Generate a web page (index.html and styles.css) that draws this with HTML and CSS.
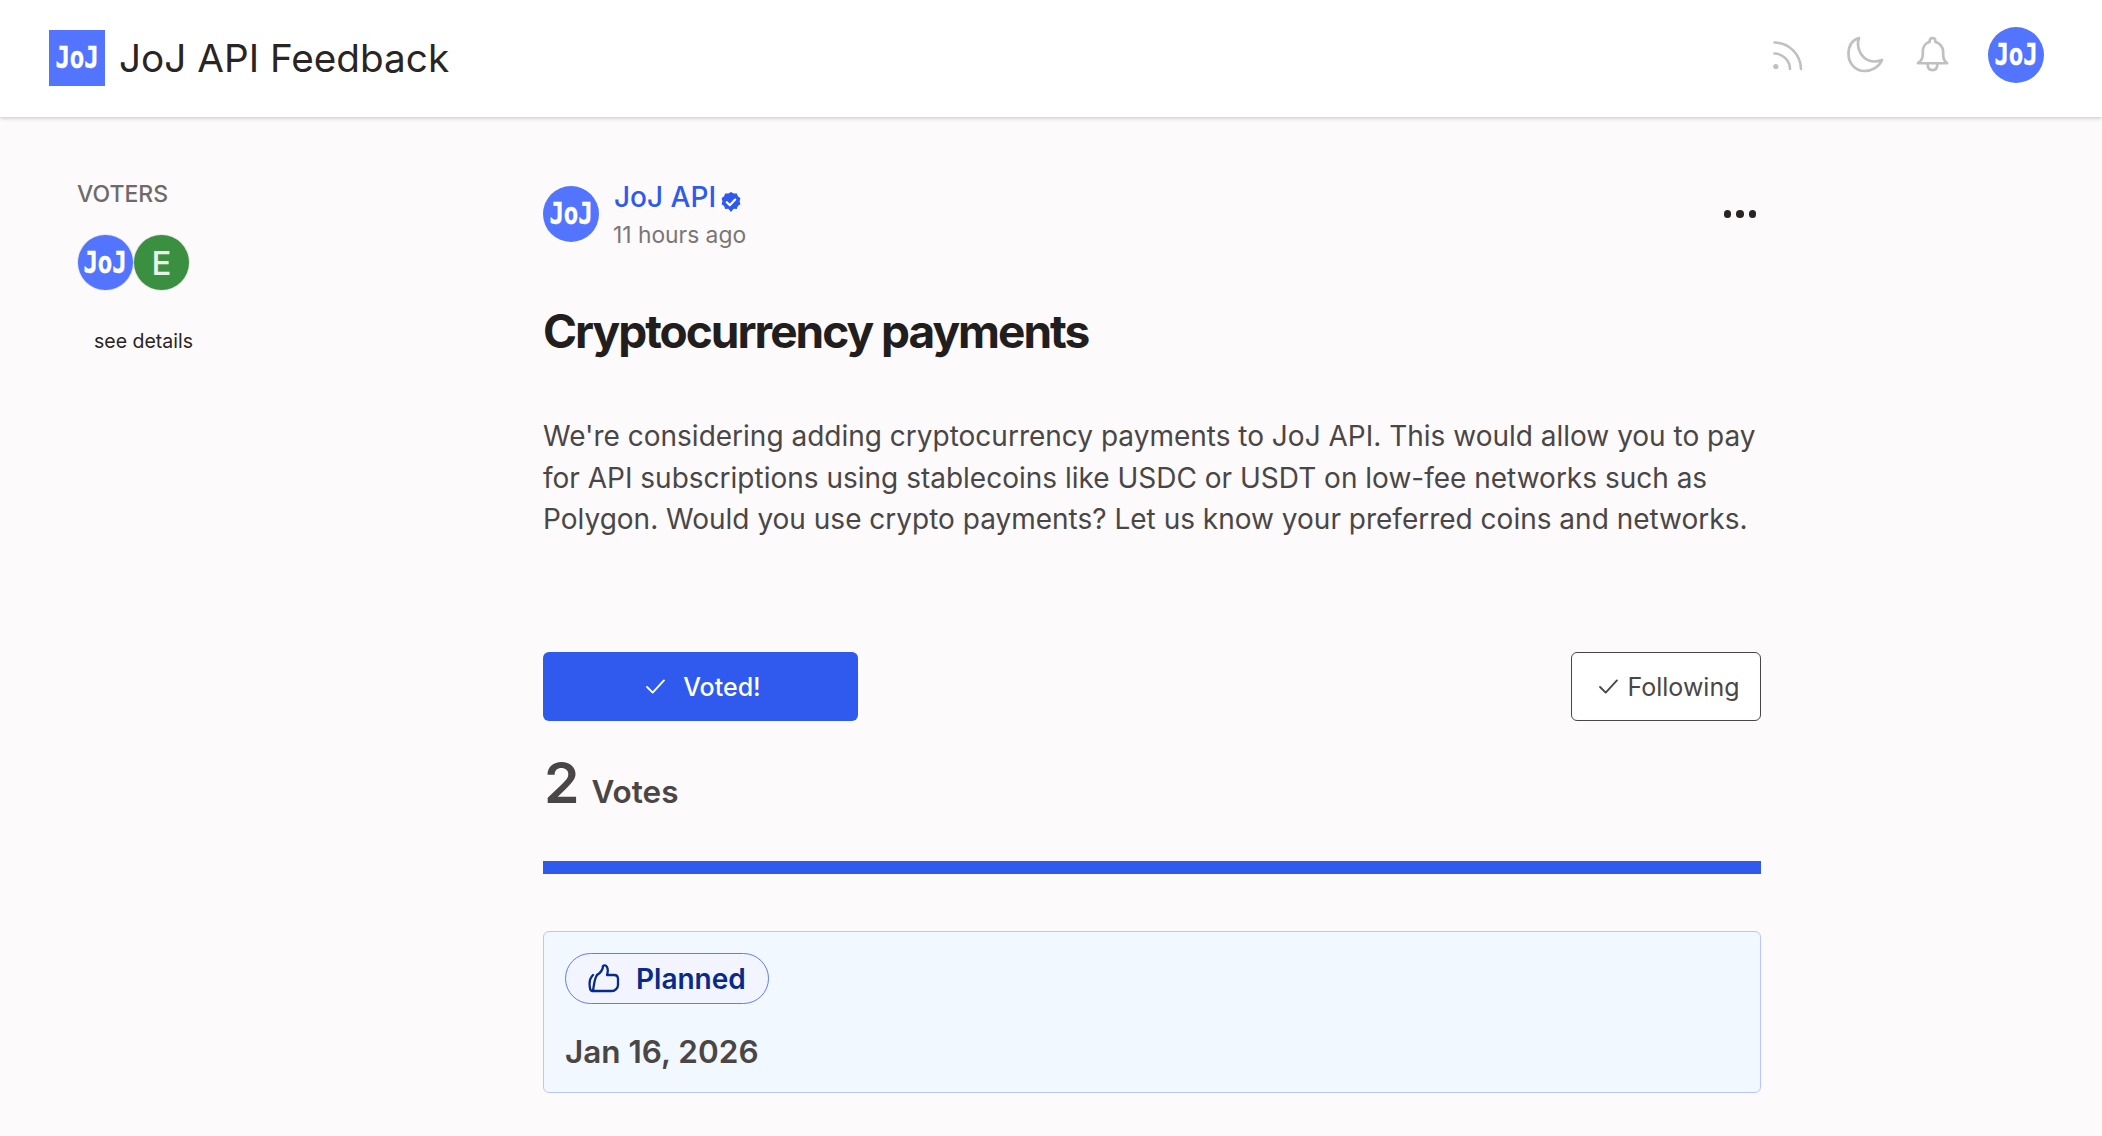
FILE: index.html
```html
<!DOCTYPE html>
<html lang="en">
<head>
<meta charset="utf-8">
<title>JoJ API Feedback</title>
<link rel="stylesheet" href="styles.css">
</head>
<body>
<header class="topbar">
  <div class="brand">
    <div class="logo"><span class="joj joj-logo">JoJ</span></div>
    <div class="brand-name">JoJ API Feedback</div>
  </div>
  <div class="tools">
    <svg class="icon icon-rss" viewBox="0 0 30 30" fill="none" stroke="#c4bfbf" stroke-width="2.6" stroke-linecap="round"><path d="M1.5 1.5A27 27 0 0 1 28 28"/><path d="M1.5 12.5A16 16 0 0 1 17 28"/><circle cx="2.8" cy="25.5" r="2.6" fill="#c4bfbf" stroke="none"/></svg>
    <svg class="icon icon-moon" viewBox="0 0 37 37" fill="none" stroke="#c4bfbf" stroke-width="2.7" stroke-linecap="round" stroke-linejoin="round"><path d="M12 2C5 4 1.500 10 1.500 18C1.500 27 8 35 17.500 35C25 35 32 31 35 24C31 25.500 26 26 22 24.500C13 21 9 10 12 2z"/></svg>
    <svg class="icon icon-bell" viewBox="0 0 34 38" fill="none" stroke="#c4bfbf" stroke-width="2.8" stroke-linecap="round" stroke-linejoin="round"><path d="M2 28h30c-3-2-4-5-4-9v-3c0-5-4-9-8-10 0-3-1-4-3-4s-3 1-3 4C10 7 7 11 7 16v3c0 4-2 7-5 9z"/><path d="M12 29c0 4 2 6 5 6s5-2 5-6"/></svg>
    <div class="avatar avatar-blue"><span class="joj">JoJ</span></div>
  </div>
</header>
<div class="page">
  <aside class="side">
    <div class="side-title">VOTERS</div>
    <div class="voters">
      <div class="avatar avatar-blue voter"><span class="joj">JoJ</span></div>
      <div class="avatar avatar-green voter"><span class="letter">E</span></div>
    </div>
    <div class="see">see details</div>
  </aside>
  <main class="post">
    <div class="post-head">
      <div class="author">
        <div class="avatar avatar-blue"><span class="joj">JoJ</span></div>
        <div class="who">
          <div class="name-row">
            <span class="name">JoJ API</span>
            <svg class="badge" viewBox="0 0 20 20"><path fill="#2f5aed" d="M10 0l2.700 1.600 3.100-.2 1.100 2.900 2.500 1.900-.8 3 .8 3-2.500 1.900-1.100 2.900-3.100-.2L10 20l-2.700-3.200-3.100.2-1.100-2.900L.6 12.200l.8-3-.8-3 2.500-1.900 1.100-2.900 3.100.2z"/><path d="M5.800 10.200l3 3 5.400-5.600" fill="none" stroke="#fff" stroke-width="2.200" stroke-linecap="round" stroke-linejoin="round"/></svg>
          </div>
          <div class="time">11 hours ago</div>
        </div>
      </div>
      <div class="dots"><i></i><i></i><i></i></div>
    </div>
    <h1 class="title">Cryptocurrency payments</h1>
    <p class="body">We're considering adding cryptocurrency payments to JoJ API. This would allow you to pay for API subscriptions using stablecoins like USDC or USDT on low-fee networks such as Polygon. Would you use crypto payments? Let us know your preferred coins and networks.</p>
    <div class="actions">
      <button class="btn-vote"><svg class="check" viewBox="0 0 20 16" fill="none" stroke="#fff" stroke-width="2" stroke-linecap="round" stroke-linejoin="round"><path d="M1 8.500l6 6L19 1.500"/></svg><span>Voted!</span></button>
      <button class="btn-follow"><svg class="check" viewBox="0 0 20 16" fill="none" stroke="#4b4646" stroke-width="2" stroke-linecap="round" stroke-linejoin="round"><path d="M1 8.500l6 6L19 1.500"/></svg><span>Following</span></button>
    </div>
    <div class="votes"><span class="count">2</span><span class="votes-label">Votes</span></div>
    <div class="bar"></div>
    <section class="status">
      <div class="pill">
        <svg class="thumb" viewBox="0 0 32 30" fill="none" stroke="#082a8a" stroke-width="2.300" stroke-linecap="round" stroke-linejoin="round"><path d="M5 11C2 14 1 19 2 24c0 2 1 3 3 3 1-6 1-11 4-16"/><path d="M5 27h19c3 0 6-3 6-6v-6c0-3-2-4-4-4h-7c1-3 1-6 0-8-1-2-3-2-4-1 0 5-3 7-6 9"/></svg>
        <span>Planned</span>
      </div>
      <div class="date">Jan 16, 2026</div>
    </section>
  </main>
</div>
</body>
</html>
```
FILE: styles.css
```css
* { box-sizing: border-box; }
html, body { margin: 0; padding: 0; }
body {
  height: 1136px;
  overflow: hidden;
  background: #fcfafb;
  font-family: Inter, "Liberation Sans", sans-serif;
  color: #2a2525;
}
.topbar {
  height: 117px;
  background: #fff;
  box-shadow: 0 1px 4px rgba(60, 50, 50, .28);
  display: flex;
  align-items: center;
  justify-content: space-between;
  padding: 0 58px 0 49px;
}
.brand { display: flex; align-items: center; gap: 14px; margin-top: -1px; }
.logo {
  width: 56px; height: 56px;
  background: #5274ff;
  display: flex; align-items: center; justify-content: center;
}
.joj {
  display: inline-block;
  font-family: "DejaVu Sans Mono", monospace;
  font-weight: 700;
  color: #fff;
  font-size: 30px;
  line-height: 1;
  -webkit-text-stroke: .5px #fff;
  transform: scaleX(.8);
}
.brand-name { font-size: 38.7px; font-weight: 400; color: #2a2525; }
.tools { display: flex; align-items: center; margin-top: -8px; }
.icon { display: block; }
.icon-rss { width: 30px; height: 30px; margin-right: 44px; margin-top: 2px; }
.icon-moon { width: 37px; height: 37px; margin-right: 32px; }
.icon-bell { width: 33px; height: 37px; margin-right: 39px; }
.avatar {
  width: 56px; height: 56px;
  border-radius: 50%;
  display: flex; align-items: center; justify-content: center;
  flex: none;
}
.avatar-blue { background: #5274ff; }
.avatar-green { background: #3a8f40; }
.page {
  display: grid;
  grid-template-columns: 466px 1218px;
  padding: 0 0 0 77px;
}
.side { padding-top: 63px; }
.side-title { font-size: 23px; font-weight: 550; color: #6f6a6a; line-height: 28px; }
.voters { display: flex; gap: 1px; margin: 27px 0 0 1px; }
.voter { width: 55px; height: 55px; box-shadow: 0 0 0 1px rgba(0, 0, 0, .08); }
.letter { color: #e8f2e8; font-size: 33px; font-weight: 500; }
.see { font-size: 19.5px; color: #2a2525; margin: 39px 0 0 17px; line-height: 24px; }
.post { padding-top: 63px; }
.post-head { display: flex; align-items: flex-start; justify-content: space-between; }
.author { display: flex; align-items: flex-start; gap: 15px; margin-top: 6px; }
.who { margin-top: -5px; }
.name-row { display: flex; align-items: center; gap: 5px; }
.name { font-size: 28px; font-weight: 500; color: #2f5aed; line-height: 32px; }
.badge { width: 20px; height: 20px; margin-top: 10px; }
.time { font-size: 22.8px; color: #7b7575; line-height: 30px; margin-top: 7px; margin-left: -1px; }
.dots { display: flex; gap: 5px; margin: 30px 5px 0 0; }
.dots i { width: 7.5px; height: 7.5px; border-radius: 50%; background: #2a2525; display: block; }
.title {
  font-size: 46px; font-weight: 700; letter-spacing: -2px;
  line-height: 56px; margin: 53px 0 0; color: #221e1e;
}
.body {
  font-size: 28px; line-height: 41.7px; color: #4b4646;
  margin: 57px 0 0;
}
.actions { display: flex; justify-content: space-between; margin-top: 111px; }
button { font-family: inherit; cursor: pointer; display: flex; align-items: center; justify-content: center; }
.btn-vote {
  width: 315px; height: 69px; background: #2f5aed; color: #fff;
  border: 0; border-radius: 6px; font-size: 25px; font-weight: 500; gap: 18px; padding-left: 12px;
}
.btn-follow {
  width: 190px; height: 69px; background: #fff; color: #4b4646;
  border: 1px solid #4b4646; border-radius: 6px; font-size: 25px; font-weight: 400; gap: 9px; padding-left: 13px;
}
.check { width: 19px; height: 15px; }
.votes { display: flex; align-items: baseline; gap: 12px; margin-top: 30px; color: #4b4646; line-height: 64px; padding-left: 1px; }
.count { font-size: 57px; font-weight: 600; }
.votes-label { font-size: 31.5px; font-weight: 600; }
.bar { height: 13px; background: #2f5aed; margin-top: 37px; }
.status {
  margin-top: 57px; height: 162px;
  background: #f1f8ff; border: 1px solid #b9c5ff; border-radius: 6px;
  padding: 21px 21px 0;
}
.pill {
  display: inline-flex; align-items: center; gap: 16px;
  height: 51px; padding: 0 22px;
  background: #f2f4ff; border: 1px solid #5f7cf5; border-radius: 26px;
  font-size: 28px; font-weight: 600; color: #082a8a;
}
.thumb { width: 32px; height: 30px; }
.date { font-size: 31.5px; font-weight: 600; color: #4b4646; margin-top: 28px; line-height: 40px; }
```
